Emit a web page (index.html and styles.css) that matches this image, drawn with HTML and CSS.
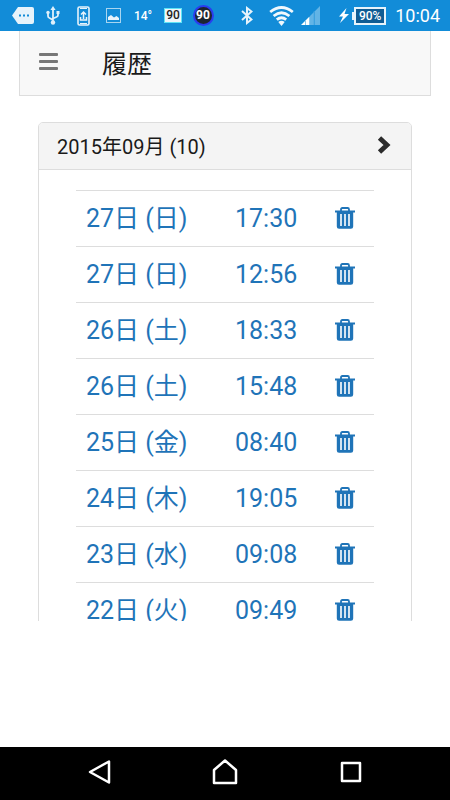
FILE: index.html
```html
<!DOCTYPE html>
<html lang="ja">
  <head>
    <meta charset="UTF-8" />
    <meta name="viewport" content="width=device-width, initial-scale=1.0" />
    <title>履歴</title>
    <link rel="stylesheet" href="styles.css">
  </head>
  <body>
    <!-- Shared icons -->
    <svg class="sprite" aria-hidden="true">
      <symbol id="icon-trash" viewBox="0 0 20 22">
        <path d="M6 4V2.400Q6 1 7.400 1h5.200Q14 1 14 2.400V4" fill="none" stroke="currentColor" stroke-width="1.800" />
        <path d="M0 3.500h20v2H18.200V19.500q0 2.300-2.300 2.300H4.100q-2.300 0-2.300-2.300V5.500H0z" fill="currentColor" />
        <path d="M6 7V19M10 7V19M14 7V19" stroke="#fff" stroke-width="1.600" />
      </symbol>
    </svg>

    <div class="status-bar">
      <div class="notifications">
        <span class="cell">
          <svg width="22" height="17" viewBox="0 0 22 17">
            <path d="M6 0h14q2 0 2 2v13q0 2-2 2H6L0 8.500z" fill="#e6f3fb" />
            <path d="M7 7.500h2v2H7zM11 7.500h2v2h-2zM15 7.500h2v2h-2z" fill="#128cd8" />
          </svg>
        </span>
        <span class="cell">
          <svg width="14" height="19" viewBox="0 0 14 19" fill="none" stroke="#dff0fb" stroke-width="1.800">
            <path d="M7 2v14M2 7v3q0 1.500 1.500 2L7 14M12 6v3q0 1.500-1.500 2L7 12.500" />
            <path d="M7 0l2.600 4H4.400zM10.500 5h3v3h-3z" fill="#dff0fb" stroke="none" />
            <circle cx="2" cy="6.500" r="1.700" fill="#dff0fb" stroke="none" />
            <circle cx="7" cy="16.500" r="2.200" fill="#dff0fb" stroke="none" />
          </svg>
        </span>
        <span class="cell">
          <svg width="13" height="20" viewBox="0 0 13 20">
            <rect x="1" y="1" width="11" height="18" rx="1.500" fill="none" stroke="#e6f3fb" stroke-width="1.600" />
            <path d="M3 2.500h7M3 17.500h7" stroke="#e6f3fb" />
            <path d="M6.500 13V6M4 8.500L6.500 6 9 8.500M3.500 11v3h6v-3" fill="none" stroke="#e6f3fb" stroke-width="1.500" />
          </svg>
        </span>
        <span class="cell">
          <svg width="15" height="15" viewBox="0 0 15 15">
            <rect x=".5" y=".5" width="14" height="14" fill="none" stroke="#a8d5f0" />
            <path d="M2 12V9l3-2 3 2.500L10.500 8l2.500 2v2z" fill="#e6f3fb" />
          </svg>
        </span>
        <span class="cell temperature">14°</span>
        <span class="cell"><span class="charge">90</span></span>
        <span class="cell"><span class="charge-ring">90</span></span>
      </div>
      <div class="system">
        <svg width="12" height="19" viewBox="0 0 12 19" fill="none" stroke="#e6f3fb" stroke-width="2">
          <path d="M1 5L10.500 13.500 6 17V2L10.500 5.500 1 14" />
        </svg>
        <svg class="wifi" width="25" height="20" viewBox="0 0 25 20" fill="none" stroke="#f0f8fd" stroke-width="2.800">
          <path d="M1.200 6Q12.500-3 23.800 6M4.600 10Q12.500 3.500 20.400 10M7.800 13.600Q12.500 9.800 17.200 13.600" />
          <path d="M9.300 16Q12.500 13.300 15.700 16L12.500 20z" fill="#f0f8fd" stroke="none" />
        </svg>
        <svg class="signal" width="19" height="19" viewBox="0 0 19 19">
          <path d="M0 19l4-4v4z" fill="#fff" />
          <path d="M4.500 14.500l4-4V19h-4z" fill="#fff" />
          <path d="M9 10l4-4v13H9zM13.500 5.500L19 0v19h-5.500z" fill="#62b4e6" />
          <path d="M13.200 5v14" stroke="#3da1df" />
        </svg>
        <svg class="bolt" width="12" height="15" viewBox="0 0 12 15">
          <path d="M8.500 0L1 8.500h4L2 15l9-9H6.500z" fill="#fff" />
        </svg>
        <span class="battery">90%</span>
        <span class="clock">10:04</span>
      </div>
    </div>

    <main class="screen">
      <header class="navbar">
        <button class="menu-button" aria-label="メニュー">
          <span class="bar"></span>
          <span class="bar"></span>
          <span class="bar"></span>
        </button>
        <h1 class="title">履歴</h1>
      </header>

      <section class="panel">
        <button class="panel-heading">
          <span>2015年09月 (10)</span>
          <svg width="14" height="18" viewBox="0 0 14 18">
            <path d="M2.500 2L10 9l-7.500 7" fill="none" stroke="#2b2b2b" stroke-width="4.800" />
          </svg>
        </button>
        <div class="panel-body">
          <table class="history">
            <tr>
              <td class="date"><a href="#">27日 (日)</a></td>
              <td class="time"><a href="#">17:30</a></td>
              <td><button class="delete" aria-label="削除"><svg><use href="#icon-trash" /></svg></button></td>
            </tr>
            <tr>
              <td class="date"><a href="#">27日 (日)</a></td>
              <td class="time"><a href="#">12:56</a></td>
              <td><button class="delete" aria-label="削除"><svg><use href="#icon-trash" /></svg></button></td>
            </tr>
            <tr>
              <td class="date"><a href="#">26日 (土)</a></td>
              <td class="time"><a href="#">18:33</a></td>
              <td><button class="delete" aria-label="削除"><svg><use href="#icon-trash" /></svg></button></td>
            </tr>
            <tr>
              <td class="date"><a href="#">26日 (土)</a></td>
              <td class="time"><a href="#">15:48</a></td>
              <td><button class="delete" aria-label="削除"><svg><use href="#icon-trash" /></svg></button></td>
            </tr>
            <tr>
              <td class="date"><a href="#">25日 (金)</a></td>
              <td class="time"><a href="#">08:40</a></td>
              <td><button class="delete" aria-label="削除"><svg><use href="#icon-trash" /></svg></button></td>
            </tr>
            <tr>
              <td class="date"><a href="#">24日 (木)</a></td>
              <td class="time"><a href="#">19:05</a></td>
              <td><button class="delete" aria-label="削除"><svg><use href="#icon-trash" /></svg></button></td>
            </tr>
            <tr>
              <td class="date"><a href="#">23日 (水)</a></td>
              <td class="time"><a href="#">09:08</a></td>
              <td><button class="delete" aria-label="削除"><svg><use href="#icon-trash" /></svg></button></td>
            </tr>
            <tr>
              <td class="date"><a href="#">22日 (火)</a></td>
              <td class="time"><a href="#">09:49</a></td>
              <td><button class="delete" aria-label="削除"><svg><use href="#icon-trash" /></svg></button></td>
            </tr>
          </table>
        </div>
      </section>
    </main>

    <nav class="nav-bar">
      <button aria-label="戻る">
        <svg width="26" height="26" viewBox="0 0 26 26">
          <path d="M23 2.500v21L4 13z" />
        </svg>
      </button>
      <button aria-label="ホーム">
        <svg width="26" height="26" viewBox="0 0 26 26">
          <path d="M2 24V11L13 1.500 24 11v13z" />
        </svg>
      </button>
      <button aria-label="アプリ一覧">
        <svg width="26" height="26" viewBox="0 0 26 26">
          <path d="M4 4h18v18H4z" />
        </svg>
      </button>
    </nav>
  </body>
</html>
```
FILE: styles.css
```css
:root {
  --status-color: #128cd8;
  --link-color: #1f74b8;
  --text-color: #1a1a1a;
  --border-color: #dddddd;
  --heading-bg: #f4f4f4;
  --navbar-bg: #f8f8f8;
}

* {
  margin: 0;
  padding: 0;
  box-sizing: border-box;
}

body {
  display: flex;
  flex-direction: column;
  height: 100vh;
  font-family: Roboto, "Noto Sans CJK JP", sans-serif;
  color: var(--text-color);
  background-color: white;
}

button {
  border: none;
  background: none;
  font: inherit;
  color: inherit;
  cursor: pointer;
}

svg {
  display: block;
  flex: none;
}

.sprite {
  position: absolute;
  width: 0;
  height: 0;
}

/* Status bar */
.status-bar {
  flex: none;
  display: flex;
  justify-content: space-between;
  height: 31px;
  padding: 0 10px 0 8px;
  background-color: var(--status-color);
  color: white;
}

.notifications,
.system {
  display: flex;
  align-items: center;
}

.cell {
  display: flex;
  justify-content: center;
  width: 30px;
}

.temperature {
  font-size: 12px;
  font-weight: 500;
}

.charge {
  width: 18px;
  border: 1px solid #5fe3f5;
  background-color: #eef6fa;
  color: #222;
  font-size: 12px;
  font-weight: 500;
  line-height: 13px;
  text-align: center;
}

.charge-ring {
  width: 21px;
  height: 21px;
  border: 2px solid #2a3cf0;
  border-radius: 50%;
  background-color: #1c2530;
  font-size: 12px;
  font-weight: 700;
  line-height: 17px;
  text-align: center;
}

.wifi {
  margin-left: 16px;
}

.signal {
  margin-left: 7px;
}

.bolt {
  margin-left: 18px;
}

.battery {
  position: relative;
  width: 32px;
  margin-left: 4px;
  border: 2px solid #e6f3fb;
  background-color: #0f5c94;
  font-size: 12px;
  font-weight: 500;
  line-height: 14px;
  text-align: center;
}

.battery::before {
  content: "";
  position: absolute;
  top: 3px;
  left: -4px;
  width: 3px;
  height: 8px;
  background-color: #e6f3fb;
}

.clock {
  margin-left: 9px;
  font-size: 18px;
}

/* Screen */
.screen {
  flex: 1;
  min-height: 0;
  margin-bottom: 126px;
  padding: 0 19px;
  overflow: hidden;
}

.navbar {
  display: flex;
  align-items: center;
  height: 65px;
  padding: 0 19px 3px;
  border: 1px solid var(--border-color);
  border-top: none;
  background-color: var(--navbar-bg);
}

.menu-button {
  display: flex;
  flex-direction: column;
  gap: 4px;
  width: 19px;
}

.bar {
  height: 3px;
  border-radius: 1px;
  background-color: #777;
}

.title {
  margin-left: 44px;
  font-size: 25px;
  font-weight: 400;
}

.panel {
  margin: 26px 19px;
  border: 1px solid var(--border-color);
  border-radius: 5px;
  overflow: hidden;
}

.panel-heading {
  display: flex;
  justify-content: space-between;
  align-items: center;
  width: 100%;
  height: 47px;
  padding: 0 20px 2px 18px;
  border-bottom: 1px solid var(--border-color);
  background-color: var(--heading-bg);
  font-size: 20px;
}

.panel-body {
  padding: 20px 37px;
}

.history {
  width: 100%;
  border-collapse: collapse;
}

.history tr {
  height: 56px;
  border-top: 1px solid var(--border-color);
}

.history td {
  vertical-align: middle;
  font-size: 25px;
  line-height: 32px;
}

.history a {
  color: var(--link-color);
  text-decoration: none;
}

.date {
  width: 50%;
  padding-left: 10px;
}

.time {
  padding-left: 10px;
}

.history td:last-child {
  padding-bottom: 2px;
}

.delete {
  display: block;
  margin: 0 19px 0 auto;
  color: var(--link-color);
}

.delete svg {
  width: 20px;
  height: 22px;
}

/* Navigation buttons */
.nav-bar {
  flex: none;
  display: flex;
  justify-content: center;
  height: 53px;
  padding-bottom: 4px;
  background-color: black;
}

.nav-bar button {
  display: flex;
  justify-content: center;
  align-items: center;
  width: 28%;
}

.nav-bar path {
  fill: none;
  stroke: white;
  stroke-width: 2.5;
  stroke-linejoin: round;
}
```
